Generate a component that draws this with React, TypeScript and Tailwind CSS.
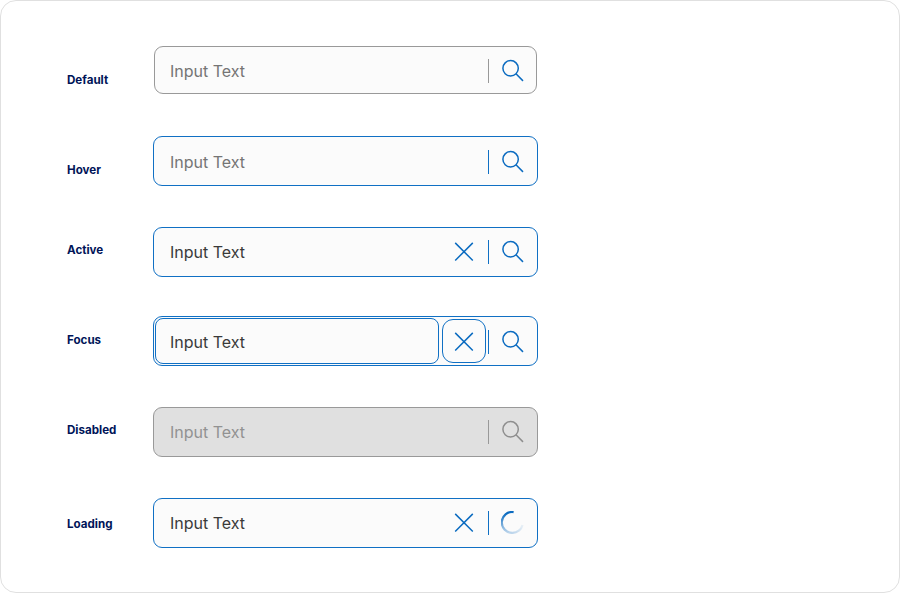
type Kind = "default" | "hover" | "active" | "focus" | "disabled" | "loading";

const rows: { label: string; kind: Kind; height: string; labelTop: string }[] = [
  { label: "Default", kind: "default", height: "h-[90px]", labelTop: "pt-[27px]" },
  { label: "Hover", kind: "hover", height: "h-[91px]", labelTop: "pt-[27px]" },
  { label: "Active", kind: "active", height: "h-[89px]", labelTop: "pt-[16px]" },
  { label: "Focus", kind: "focus", height: "h-[91px]", labelTop: "pt-[17px]" },
  { label: "Disabled", kind: "disabled", height: "h-[91px]", labelTop: "pt-[16px]" },
  { label: "Loading", kind: "loading", height: "h-[50px]", labelTop: "pt-[19px]" },
];

const box: Record<Kind, string> = {
  default: "ml-px h-12 w-[383px] border-[#999] bg-[#fbfbfb] pt-0.5 pl-[15px] text-[#757575]",
  hover: "h-[50px] w-[385px] border-[#1070c4] bg-[#fbfbfb] pt-px pl-4 text-[#757575]",
  active: "h-[50px] w-[385px] border-[#1070c4] bg-[#fbfbfb] pl-4 text-[#3a3a3a]",
  focus: "h-[50px] w-[385px] border-[#1070c4] bg-[#fbfbfb] pt-px pl-4 text-[#3a3a3a]",
  disabled: "h-[50px] w-[385px] border-[#999] bg-[#e0e0e0] pl-4 text-[#929292]",
  loading: "h-[50px] w-[385px] border-[#1070c4] bg-[#fbfbfb] pl-4 text-[#3a3a3a]",
};

function Search({ muted }: { muted: boolean }) {
  return (
    <svg width="24" height="24" viewBox="0 0 24 24" fill="none" strokeWidth="1.5" className={muted ? "stroke-[#8e8e8e]" : "stroke-[#0b6bc0]"}>
      <circle cx="9.6" cy="9.3" r="7.7" />
      <path d="M15 14.8 22 21.9" />
    </svg>
  );
}

function Close() {
  return (
    <svg width="20" height="20" viewBox="0 0 20 20" fill="none" strokeWidth="1.5" className="stroke-[#0b6bc0]">
      <path d="M1.2.9 18.8 18.5M18.8.9 1.2 18.5" />
    </svg>
  );
}

function Spinner() {
  return (
    <svg width="24" height="24" viewBox="0 0 24 24" fill="none" strokeWidth="2.2">
      <defs>
        <linearGradient id="fade" gradientUnits="userSpaceOnUse" x1="10" y1="0" x2="13" y2="22">
          <stop offset="0.08" stopColor="#0b6bc0" />
          <stop offset="0.5" stopColor="#0b6bc0" stopOpacity="0.6" />
          <stop offset="0.95" stopColor="#0b6bc0" stopOpacity="0.27" />
        </linearGradient>
        <linearGradient id="tail" gradientUnits="userSpaceOnUse" x1="11.4" y1="22" x2="23" y2="14">
          <stop offset="0" stopColor="#0b6bc0" stopOpacity="0.27" />
          <stop offset="1" stopColor="#0b6bc0" stopOpacity="0.06" />
        </linearGradient>
      </defs>
      <path d="M12.6 1.1A10.4 10.4 0 1 0 11.4 21.8" stroke="url(#fade)" />
      <path d="M11.4 21.8A10.4 10.4 0 0 0 21.6 14" stroke="url(#tail)" />
    </svg>
  );
}

function Field({ kind }: { kind: Kind }) {
  const gray = kind === "default" || kind === "disabled";
  return (
    <div className={`relative flex items-center rounded-[9px] border ${box[kind]}`}>
      <span className="w-[284px] text-[16px]">Input Text</span>
      <span className="flex w-5">{["active", "focus", "loading"].includes(kind) && <Close />}</span>
      <span className={`ml-[14px] h-6 w-px ${gray ? "bg-[#999]" : "bg-[#1070c4]"}`} />
      <span className="ml-3">{kind === "loading" ? <Spinner /> : <Search muted={kind === "disabled"} />}</span>
      {kind === "focus" && (
        <>
          <span className="absolute top-px left-px h-[46px] w-[284px] rounded-[8px] border border-[#1070c4]" />
          <span className="absolute top-[2px] left-[288px] h-11 w-11 rounded-[11px] border border-[#1070c4]" />
        </>
      )}
    </div>
  );
}

export default function App() {
  return (
    <main className="h-[593px] w-[900px] rounded-[16px] border border-[#e0e0e0] bg-white pt-[45px] pl-[66px] font-['Inter',sans-serif]">
      {rows.map((r) => (
        <div key={r.kind} className={`flex items-start ${r.height}`}>
          <div className={`w-[86px] text-[11.6px] leading-[14px] font-bold text-[#001458] ${r.labelTop}`}>{r.label}</div>
          <Field kind={r.kind} />
        </div>
      ))}
    </main>
  );
}
